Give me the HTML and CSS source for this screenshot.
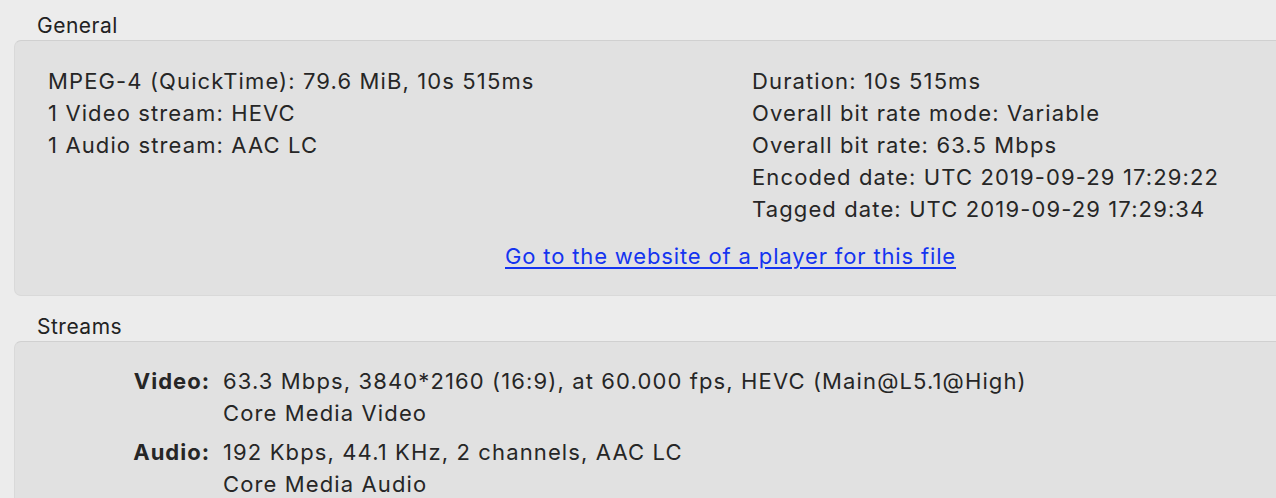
FILE: index.html
```html
<!DOCTYPE html>
<html>
<head>
<meta charset="utf-8">
<link rel="stylesheet" href="styles.css">
</head>
<body>
<div class="page">
  <section class="group">
    <h2 class="group-title">General</h2>
    <div class="box general">
      <div class="cols">
        <div class="col">
          <div class="line">MPEG-4 (QuickTime): 79.6 MiB, 10s 515ms</div>
          <div class="line">1 Video stream: HEVC</div>
          <div class="line">1 Audio stream: AAC LC</div>
        </div>
        <div class="col">
          <div class="line">Duration: 10s 515ms</div>
          <div class="line">Overall bit rate mode: Variable</div>
          <div class="line">Overall bit rate: 63.5 Mbps</div>
          <div class="line">Encoded date: UTC 2019-09-29 17:29:22</div>
          <div class="line">Tagged date: UTC 2019-09-29 17:29:34</div>
        </div>
      </div>
      <div class="link-row"><a class="player-link" href="#">Go to the website of a player for this file</a></div>
    </div>
  </section>
  <section class="group">
    <h2 class="group-title">Streams</h2>
    <div class="box streams">
      <div class="stream">
        <div class="stream-label">Video:</div>
        <div class="stream-value">
          <div class="line">63.3 Mbps, 3840*2160 (16:9), at 60.000 fps, HEVC (Main@L5.1@High)</div>
          <div class="line">Core Media Video</div>
        </div>
      </div>
      <div class="stream">
        <div class="stream-label">Audio:</div>
        <div class="stream-value">
          <div class="line">192 Kbps, 44.1 KHz, 2 channels, AAC LC</div>
          <div class="line">Core Media Audio</div>
        </div>
      </div>
    </div>
  </section>
</div>
</body>
</html>
```
FILE: styles.css
```css
html, body {
  margin: 0;
  padding: 0;
  background: #ececec;
  overflow: hidden;
  width: 1276px;
  height: 498px;
}
body {
  font-family: Inter, "Noto Sans", "Liberation Sans", sans-serif;
  color: #262626;
}
.page {
  padding-left: 14px;
  width: 1480px;
}
.group-title {
  margin: 0;
  font-weight: 400;
  font-size: 21px;
  letter-spacing: 0.5px;
  line-height: 24px;
  padding-left: 23px;
  padding-top: 14px;
  height: 26px;
  color: #222;
}
.group + .group .group-title {
  padding-top: 19px;
}
.box {
  width: 1432px;
  background: #e1e1e1;
  border: 1px solid #d9d9d9;
  border-top-color: #d0d0d0;
  border-radius: 7px;
  box-sizing: border-box;
}
.general {
  padding: 24px 0 23px 33px;
}
.cols {
  display: grid;
  grid-template-columns: 704px 1fr;
}
.line {
  font-size: 22px;
  letter-spacing: 1.12px;
  line-height: 32px;
  white-space: nowrap;
}
.link-row {
  margin-top: 15px;
  padding-left: 457px;
}
.player-link {
  font-size: 22px;
  letter-spacing: 0.85px;
  line-height: 32px;
  color: #1434f0;
  text-decoration: underline;
  text-underline-offset: 3px;
}
.streams {
  padding: 23px 0 0 0;
  height: 200px;
}
.stream {
  display: flex;
  margin-bottom: 7px;
}
.stream-label {
  width: 195px;
  text-align: right;
  font-weight: 700;
  font-size: 22px;
  letter-spacing: 1px;
  line-height: 32px;
}
.stream-value {
  padding-left: 13px;
}
```
